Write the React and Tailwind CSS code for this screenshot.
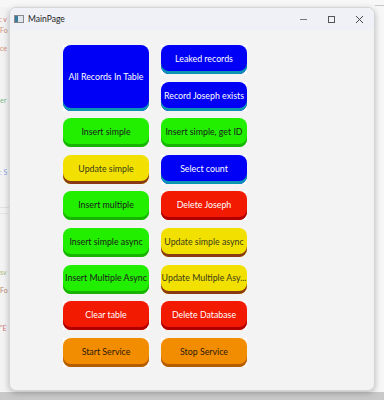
import React from "react";

const styles = {
  blue: { bg: "bg-[#0000f6]", sh: "shadow-[inset_0_-3px_0_#0a95b0]", text: "text-white", white: true },
  green: { bg: "bg-[#22ee00]", sh: "shadow-[inset_0_-3px_0_#17b300]", text: "text-[#1a1a1a]", white: false },
  yellow: { bg: "bg-[#f2e100]", sh: "shadow-[inset_0_-3px_0_#8a3a12]", text: "text-[#3a3a1a]", white: false },
  red: { bg: "bg-[#f21a00]", sh: "shadow-[inset_0_-3px_0_#b00000]", text: "text-white", white: true },
  orange: { bg: "bg-[#f28c00]", sh: "shadow-[inset_0_-3px_0_#b45c00]", text: "text-[#2a1a0a]", white: true },
};

function Btn({ label, color, big }) {
  const s = styles[color];
  return (
    <div className={`${s.white ? "bg-white" : ""} ${big ? "row-span-2" : ""} flex min-w-0`}>
      <div
        className={`${s.bg} ${s.sh} ${s.text} w-full min-w-0 rounded-[8px] flex items-center justify-center pb-[2px] text-[8.8px] whitespace-nowrap overflow-hidden`}
      >
        <span>{label}</span>
      </div>
    </div>
  );
}

export default function App() {
  return (
    <div
      className="w-[384px] h-[400px] bg-[#f7f7f7] relative overflow-hidden"
      style={{ fontFamily: 'Lato, "Noto Sans", sans-serif' }}
    >
      {/* background editor fragments */}
      <div className="absolute left-0 top-[7px] w-[9px] h-[384px] bg-[#f2f2f2] text-[7px] leading-none opacity-70">
        <div className="absolute top-[9px] left-0 text-[#c0392b]">: v</div>
        <div className="absolute top-[20px] left-0 text-[#c06040]">Fo</div>
        <div className="absolute top-[38px] left-0 text-[#c06040]">ce</div>
        <div className="absolute top-[90px] left-0 text-[#40a060]">er</div>
        <div className="absolute top-[162px] left-0 text-[#6080e0]">: S</div>
        <div className="absolute top-[200px] left-0 w-[9px] h-[1px] bg-[#d8d8d8]"></div>
        <div className="absolute top-[206px] left-0 w-[9px] h-[1px] bg-[#dcdcdc]"></div>
        <div className="absolute top-[262px] left-0 text-[#80a040]">sv</div>
        <div className="absolute top-[280px] left-0 text-[#a05030]">Fo</div>
        <div className="absolute top-[318px] left-0 text-[#c04040]">"E</div>
      </div>
      <div className="absolute left-[375px] top-[5px] w-[9px] h-[1px] bg-[#c8c8c8]"></div>
      <div className="absolute left-0 top-[392px] w-[384px] h-[8px] bg-[#c9c9c9]"></div>

      <div className="pl-[9px] pt-[7px] relative">
        <div className="w-[366px] h-[384px] rounded-[7px] overflow-hidden bg-[#f3f3f3] border border-[#d5d5d5] shadow-[0_2px_6px_rgba(0,0,0,0.25)] flex flex-col">
          {/* title bar */}
          <div className="h-[22px] bg-[#eff1f7] flex items-center shrink-0">
            <div className="ml-[4px] w-[10px] h-[8px] border border-[#8a8a8a] bg-[#dfe6ee] flex">
              <div className="w-[3px] h-full bg-[#3a7a9a]"></div>
            </div>
            <span className="ml-[4px] text-[8.5px] text-[#222]">MainPage</span>
            <div className="ml-auto flex items-center h-full">
              <div className="w-[28px] flex justify-center">
                <div className="w-[7px] h-[1px] bg-[#777]"></div>
              </div>
              <div className="w-[28px] flex justify-center">
                <div className="w-[7px] h-[7px] border border-[#555]"></div>
              </div>
              <div className="w-[28px] flex justify-center mr-[1px]">
                <svg width="9" height="9" viewBox="0 0 9 9">
                  <path d="M1 1L8 8M8 1L1 8" stroke="#444" strokeWidth="1" />
                </svg>
              </div>
            </div>
          </div>
          {/* content */}
          <div className="pl-[53px] pt-[15px]">
            <div className="grid grid-cols-[86px_86px] auto-rows-[29px] gap-x-[12px] gap-y-[7.6px]">
              <Btn label="All Records In Table" color="blue" big />
              <Btn label="Leaked records" color="blue" />
              <Btn label="Record Joseph exists" color="blue" />
              <Btn label="Insert simple" color="green" />
              <Btn label="Insert simple, get ID" color="green" />
              <Btn label="Update simple" color="yellow" />
              <Btn label="Select count" color="blue" />
              <Btn label="Insert multiple" color="green" />
              <Btn label="Delete Joseph" color="red" />
              <Btn label="Insert simple async" color="green" />
              <Btn label="Update simple async" color="yellow" />
              <Btn label="Insert Multiple Async" color="green" />
              <Btn label="Update Multiple Asy..." color="yellow" />
              <Btn label="Clear table" color="red" />
              <Btn label="Delete Database" color="red" />
              <Btn label="Start Service" color="orange" />
              <Btn label="Stop Service" color="orange" />
            </div>
          </div>
        </div>
      </div>
    </div>
  );
}
